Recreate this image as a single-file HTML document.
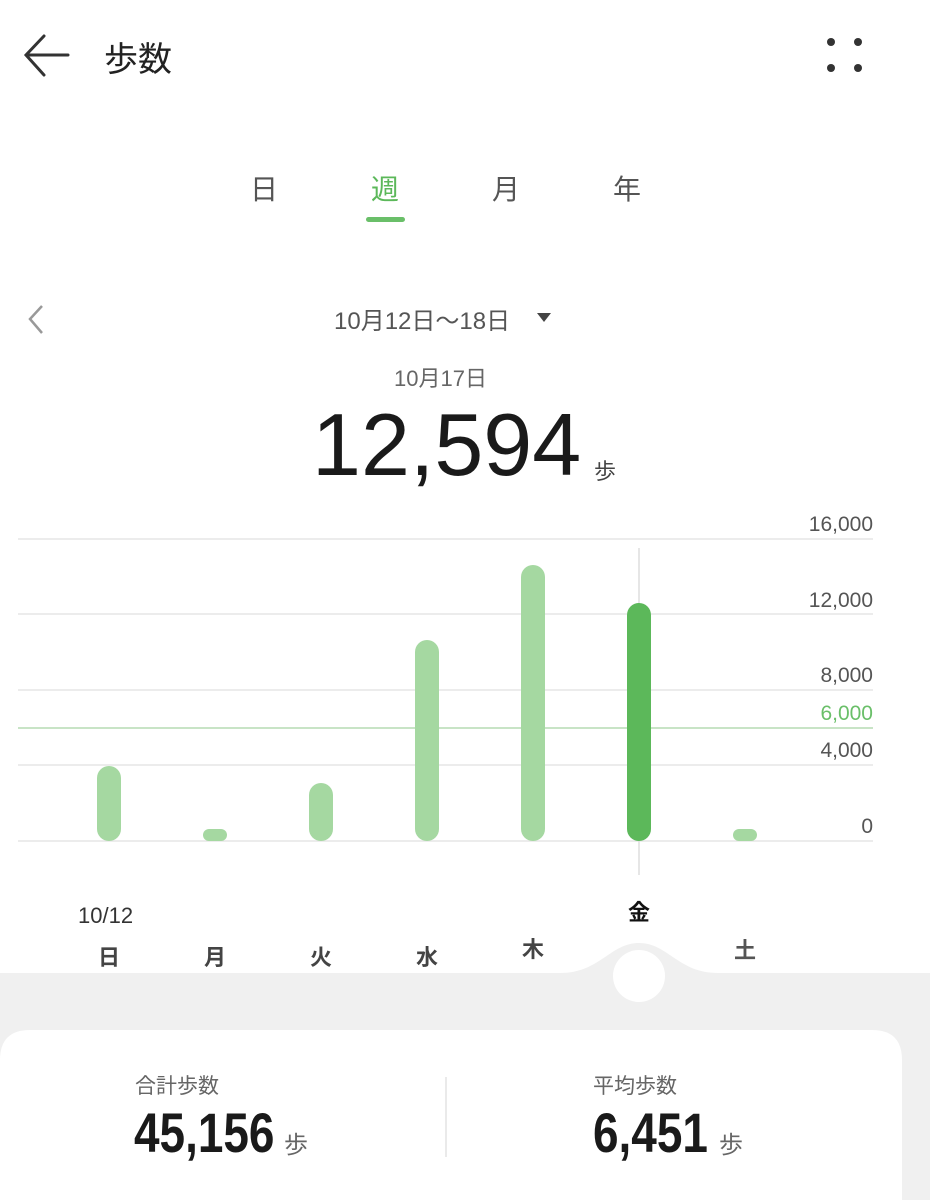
<!DOCTYPE html>
<html><head><meta charset="utf-8"><style>
*{margin:0;padding:0;box-sizing:border-box}
body{width:930px;height:1200px;background:#fff;position:relative;overflow:hidden;font-family:"Liberation Sans","Noto Sans CJK JP",sans-serif;color:#222}
.a{position:absolute;white-space:nowrap}
.n{transform:scaleX(0.82);transform-origin:left top}
</style></head><body>
<svg class="a" style="left:0;top:0" width="930" height="1200">
 <path d="M68 55H28M44 36L26 55L44 75" stroke="#333" stroke-width="3" fill="none" stroke-linecap="round"/>
 <circle cx="831" cy="42" r="4" fill="#333"/><circle cx="858" cy="42" r="4" fill="#333"/>
 <circle cx="831" cy="68" r="4" fill="#333"/><circle cx="858" cy="68" r="4" fill="#333"/>
 <rect x="366" y="217" width="39" height="5" rx="2.5" fill="#6abf69"/>
 <path d="M42 306L30 319L42 333" stroke="#999" stroke-width="2.5" fill="none"/>
 <path d="M537 313h14l-7 9z" fill="#444"/>
 <g stroke="#e6e6e6" stroke-width="1.5">
  <line x1="18" y1="539" x2="873" y2="539"/><line x1="18" y1="614" x2="873" y2="614"/>
  <line x1="18" y1="690" x2="873" y2="690"/><line x1="18" y1="765" x2="873" y2="765"/>
  <line x1="18" y1="841" x2="873" y2="841"/>
 </g>
 <line x1="18" y1="728" x2="873" y2="728" stroke="#b6dcb4" stroke-width="1.5"/>
 <line x1="639" y1="548" x2="639" y2="875" stroke="#ddd" stroke-width="1.5"/>
 <g fill="#a5d8a1">
  <rect x="97" y="766" width="24" height="75" rx="12"/>
  <rect x="203" y="829" width="24" height="12" rx="6"/>
  <rect x="309" y="783" width="24" height="58" rx="12"/>
  <rect x="415" y="640" width="24" height="201" rx="12"/>
  <rect x="521" y="565" width="24" height="276" rx="12"/>
  <rect x="733" y="829" width="24" height="12" rx="6"/>
 </g>
 <rect x="627" y="603" width="24" height="238" rx="12" fill="#5cb85a"/>
 <path d="M0 973H560C600 973 610 943 639 943C668 943 678 973 718 973H930V1200H0Z" fill="#f0f0f0"/>
 <circle cx="639" cy="976" r="26" fill="#fff"/>
 <path d="M0 1200V1060Q0 1030 30 1030H872Q902 1030 902 1060V1200Z" fill="#fff"/>
 <line x1="446" y1="1077" x2="446" y2="1157" stroke="#e2e2e2" stroke-width="1.5"/>
</svg>
<div class="a" style="left:104px;top:32px;font-size:34px;color:#222">歩数</div>
<div class="a" style="left:250px;top:168px;font-size:28px;color:#555">日</div>
<div class="a" style="left:371px;top:168px;font-size:28px;color:#5cb85a">週</div>
<div class="a" style="left:492px;top:168px;font-size:28px;color:#555">月</div>
<div class="a" style="left:613px;top:168px;font-size:28px;color:#555">年</div>
<div class="a" style="left:334px;top:301px;font-size:24px;color:#555">10月12日～18日</div>
<div class="a" style="left:394px;top:361px;font-size:22px;color:#666">10月17日</div>
<div class="a" style="left:312px;top:394px;font-size:88px;color:#1a1a1a">12,594</div>
<div class="a" style="left:594px;top:454px;font-size:22px;color:#444">歩</div>
<div class="a" style="right:57px;top:513px;font-size:21px;color:#555">16,000</div>
<div class="a" style="right:57px;top:589px;font-size:21px;color:#555">12,000</div>
<div class="a" style="right:57px;top:664px;font-size:21px;color:#555">8,000</div>
<div class="a" style="right:57px;top:702px;font-size:21px;color:#6abf69">6,000</div>
<div class="a" style="right:57px;top:739px;font-size:21px;color:#555">4,000</div>
<div class="a" style="right:57px;top:815px;font-size:21px;color:#555">0</div>
<div class="a" style="left:78px;top:903px;font-size:22px;color:#333">10/12</div>
<div class="a" style="left:98px;top:940px;font-size:22px;font-weight:bold;color:#444">日</div>
<div class="a" style="left:204px;top:940px;font-size:22px;font-weight:bold;color:#444">月</div>
<div class="a" style="left:310px;top:940px;font-size:22px;font-weight:bold;color:#444">火</div>
<div class="a" style="left:416px;top:940px;font-size:22px;font-weight:bold;color:#444">水</div>
<div class="a" style="left:522px;top:932px;font-size:22px;font-weight:bold;color:#444">木</div>
<div class="a" style="left:628px;top:895px;font-size:22px;font-weight:bold;color:#111">金</div>
<div class="a" style="left:734px;top:933px;font-size:22px;font-weight:bold;color:#555">土</div>
<div class="a" style="left:135px;top:1070px;font-size:21px;color:#666">合計歩数</div>
<div class="a n" style="left:134px;top:1100px;font-size:56px;font-weight:bold;color:#1a1a1a">45,156</div>
<div class="a" style="left:284px;top:1125px;font-size:24px;color:#666">歩</div>
<div class="a" style="left:593px;top:1070px;font-size:21px;color:#666">平均歩数</div>
<div class="a n" style="left:593px;top:1100px;font-size:56px;font-weight:bold;color:#1a1a1a">6,451</div>
<div class="a" style="left:719px;top:1125px;font-size:24px;color:#666">歩</div>
</body></html>
